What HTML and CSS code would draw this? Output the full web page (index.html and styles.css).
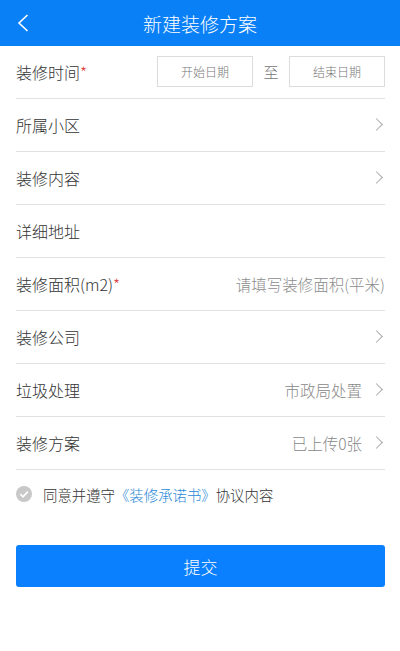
FILE: index.html
```html
<!DOCTYPE html>
<html lang="zh-CN">
<head>
<meta charset="utf-8">
<title>新建装修方案</title>
<link rel="stylesheet" href="styles.css">
</head>
<body>
<header class="topbar">
  <span class="back">
    <svg width="12" height="18" viewBox="0 0 12 18"><path d="M10.5 1 L2 9 L10.5 17" fill="none" stroke="#fff" stroke-width="1.6"/></svg>
  </span>
  <h1 class="title">新建装修方案</h1>
</header>
<main class="form">
  <div class="row">
    <span class="label">装修时间<em class="req">*</em></span>
    <div class="dates">
      <span class="datebox">开始日期</span>
      <span class="to">至</span>
      <span class="datebox">结束日期</span>
    </div>
  </div>
  <div class="row">
    <span class="label">所属小区</span>
    <span class="value"><i class="chev"></i></span>
  </div>
  <div class="row">
    <span class="label">装修内容</span>
    <span class="value"><i class="chev"></i></span>
  </div>
  <div class="row">
    <span class="label">详细地址</span>
  </div>
  <div class="row">
    <span class="label">装修面积(m2)<em class="req">*</em></span>
    <span class="value placeholder">请填写装修面积(平米)</span>
  </div>
  <div class="row">
    <span class="label">装修公司</span>
    <span class="value"><i class="chev"></i></span>
  </div>
  <div class="row">
    <span class="label">垃圾处理</span>
    <span class="value">市政局处置<i class="chev"></i></span>
  </div>
  <div class="row">
    <span class="label">装修方案</span>
    <span class="value">已上传0张<i class="chev"></i></span>
  </div>
  <div class="agree">
    <span class="check">
      <svg width="16" height="16" viewBox="0 0 16 16"><circle cx="8" cy="8" r="8" fill="#c8c8c8"/><path d="M4.3 8.2 L7 10.8 L11.8 5.6" fill="none" stroke="#fff" stroke-width="1.6"/></svg>
    </span>
    <span class="agree-text">同意并遵守<a class="link">《装修承诺书》</a>协议内容</span>
  </div>
  <button class="submit">提交</button>
</main>
</body>
</html>
```
FILE: styles.css
```css
* { box-sizing: border-box; }
body {
  margin: 0;
  background: #fff;
  font-family: "Noto Sans CJK SC", "Noto Sans", sans-serif;
  font-weight: 300;
  color: #333;
}
.topbar {
  height: 46px;
  background: #0a80f6;
  display: flex;
  align-items: center;
  justify-content: center;
  position: relative;
}
.back {
  position: absolute;
  left: 17px;
  top: 14px;
  display: flex;
}
.title {
  margin: 0;
  font-size: 19px;
  font-weight: 300;
  color: #fff;
  line-height: 1;
}
.form {
  padding: 0 15px 0 16px;
}
.row {
  height: 53px;
  border-bottom: 1px solid #e2e2e2;
  display: flex;
  align-items: center;
  justify-content: space-between;
  padding-bottom: 1px;
}
.label {
  font-size: 16px;
  color: #333;
}
.req {
  font-style: normal;
  color: #e0393e;
}
.value {
  display: flex;
  align-items: center;
  font-size: 15.5px;
  color: #888;
}
.placeholder { color: #8c8c8c; }
.chev {
  display: inline-block;
  width: 9px;
  height: 9px;
  border-top: 1.3px solid #aaa;
  border-right: 1.3px solid #aaa;
  transform: rotate(45deg);
  margin-left: 10px;
  margin-right: 4px;
}
.dates {
  display: flex;
  align-items: center;
}
.datebox {
  width: 96px;
  height: 31px;
  border: 1px solid #dcdcdc;
  display: flex;
  align-items: center;
  justify-content: center;
  font-size: 12px;
  color: #777;
}
.to {
  width: 36px;
  text-align: center;
  font-size: 15px;
  color: #777;
}
.agree {
  height: 48px;
  display: flex;
  align-items: center;
}
.check {
  display: flex;
  margin-left: 0;
  margin-right: 11px;
}
.agree-text {
  font-size: 14.4px;
  color: #333;
}
.link { color: #2c8ad6; }
.submit {
  display: block;
  width: 100%;
  height: 42px;
  margin-top: 27px;
  border: 0;
  border-radius: 3px;
  background: #0a80fe;
  color: #fff;
  font-family: inherit;
  font-weight: 300;
  font-size: 17px;
}
```
